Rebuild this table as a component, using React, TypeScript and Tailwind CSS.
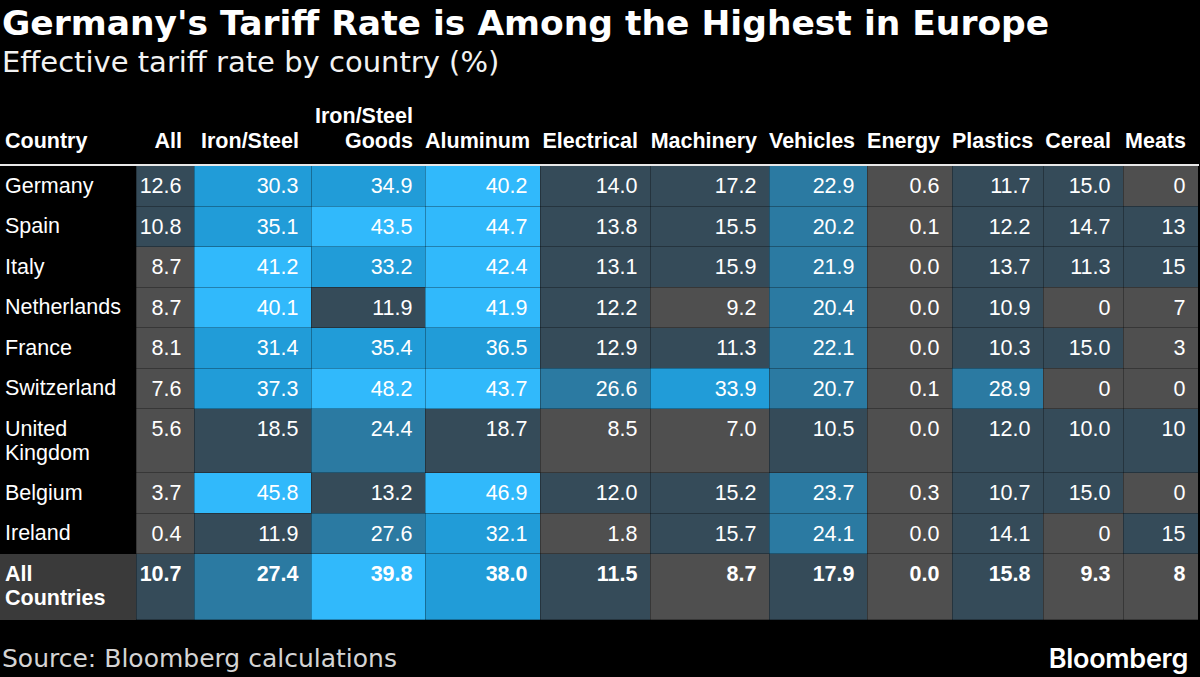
import React from "react";

const GRAY = "bg-[#4f4f4f]";
const SLATE = "bg-[#354b59]";
const MID = "bg-[#2b7aa2]";
const BRIGHT = "bg-[#219cd8]";
const LIGHT = "bg-[#31b9fb]";

function colorFor(v: string): string {
  const n = parseFloat(v);
  if (n < 10) return GRAY;
  if (n < 20) return SLATE;
  if (n < 30) return MID;
  if (n < 39) return BRIGHT;
  return LIGHT;
}

const rows: [string, string[]][] = [
  ["Germany", ["12.6", "30.3", "34.9", "40.2", "14.0", "17.2", "22.9", "0.6", "11.7", "15.0", "0"]],
  ["Spain", ["10.8", "35.1", "43.5", "44.7", "13.8", "15.5", "20.2", "0.1", "12.2", "14.7", "13"]],
  ["Italy", ["8.7", "41.2", "33.2", "42.4", "13.1", "15.9", "21.9", "0.0", "13.7", "11.3", "15"]],
  ["Netherlands", ["8.7", "40.1", "11.9", "41.9", "12.2", "9.2", "20.4", "0.0", "10.9", "0", "7"]],
  ["France", ["8.1", "31.4", "35.4", "36.5", "12.9", "11.3", "22.1", "0.0", "10.3", "15.0", "3"]],
  ["Switzerland", ["7.6", "37.3", "48.2", "43.7", "26.6", "33.9", "20.7", "0.1", "28.9", "0", "0"]],
  ["United Kingdom", ["5.6", "18.5", "24.4", "18.7", "8.5", "7.0", "10.5", "0.0", "12.0", "10.0", "10"]],
  ["Belgium", ["3.7", "45.8", "13.2", "46.9", "12.0", "15.2", "23.7", "0.3", "10.7", "15.0", "0"]],
  ["Ireland", ["0.4", "11.9", "27.6", "32.1", "1.8", "15.7", "24.1", "0.0", "14.1", "0", "15"]],
];

const allRow = ["10.7", "27.4", "39.8", "38.0", "11.5", "8.7", "17.9", "0.0", "15.8", "9.3", "8"];

const widths = [136, 58, 117, 114, 115, 110, 119, 98, 85, 91, 80, 75];

const headers: React.ReactNode[] = [
  "All",
  "Iron/Steel",
  <>
    Iron/Steel
    <br />
    Goods
  </>,
  "Aluminum",
  "Electrical",
  "Machinery",
  "Vehicles",
  "Energy",
  "Plastics",
  "Cereal",
  "Meats",
];

export default function App() {
  return (
    <div className="w-[1200px] h-[677px] bg-black text-white overflow-hidden flex flex-col">
      <div className="pl-[2px] pt-[2px] font-['DejaVu_Sans',sans-serif]">
        <h1 className="text-[34.5px] leading-[42px] font-bold">
          Germany's Tariff Rate is Among the Highest in Europe
        </h1>
        <p className="text-[29px] leading-[36px] text-[#f2f2f2]">
          Effective tariff rate by country (%)
        </p>
      </div>
      <table className="table-fixed border-collapse w-[1198px] font-['Liberation_Sans',Arial,sans-serif] text-[21.5px] leading-[24.5px]">
        <colgroup>
          {widths.map((w, i) => (
            <col key={i} style={{ width: w }} />
          ))}
        </colgroup>
        <thead>
          <tr className="h-[85px] border-b-2 border-[#e8e8e8]">
            <th className="align-bottom text-left font-bold pl-[5px] pb-[11px]">Country</th>
            {headers.map((h, i) => (
              <th key={i} className="align-bottom text-right font-bold pr-[12px] pb-[11px] whitespace-nowrap">
                {h}
              </th>
            ))}
          </tr>
        </thead>
        <tbody>
          {rows.map(([name, vals]) => (
            <tr key={name}>
              <td className="align-top text-left pl-[5px] pt-[8px] pb-[7px] bg-black">{name}</td>
              {vals.map((v, i) => (
                <td
                  key={i}
                  className={`align-top text-right pr-[12px] pt-[8px] pb-[7px] border border-black/30 ${colorFor(v)}`}
                >
                  {v}
                </td>
              ))}
            </tr>
          ))}
          <tr>
            <td className="align-top text-left pl-[5px] pt-[8px] pb-[9px] font-bold bg-[#3a3a3a]">
              All Countries
            </td>
            {allRow.map((v, i) => (
              <td
                key={i}
                className={`align-top text-right pr-[12px] pt-[8px] pb-[9px] font-bold border border-black/30 ${colorFor(v)}`}
              >
                {v}
              </td>
            ))}
          </tr>
        </tbody>
      </table>
      <div className="flex justify-between items-center pl-[2px] pr-[12px] pt-[24px]">
        <span className="font-['DejaVu_Sans',sans-serif] text-[25px] leading-[30px] text-[#d4d4d4]">
          Source: Bloomberg calculations
        </span>
        <span className="font-['Inter',sans-serif] font-semibold text-[27px] leading-[30px] tracking-[-0.3px] text-white">
          Bloomberg
        </span>
      </div>
    </div>
  );
}
